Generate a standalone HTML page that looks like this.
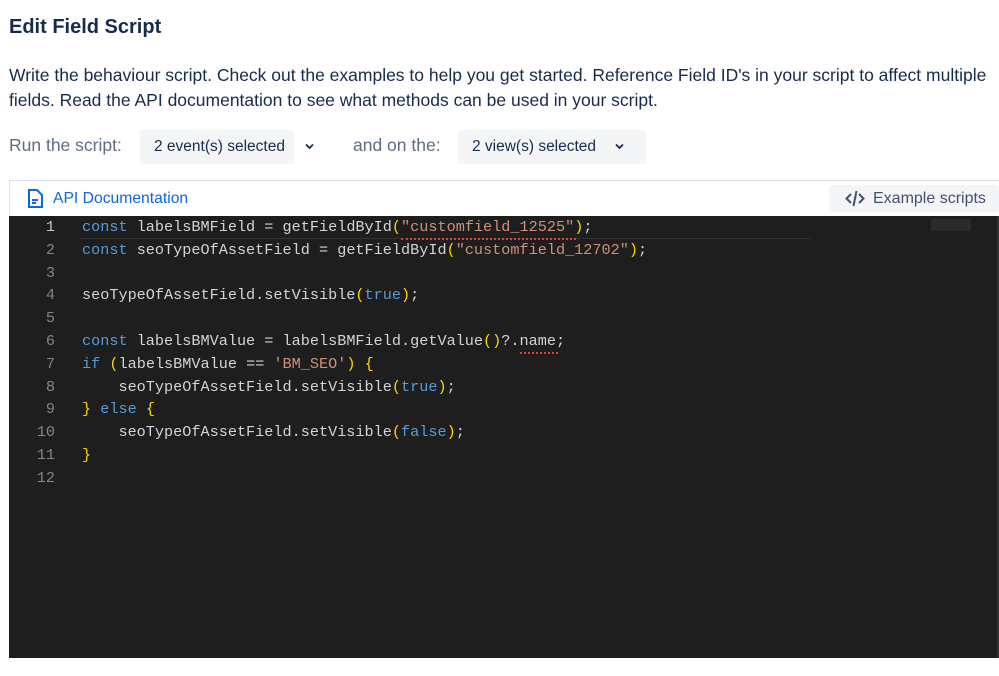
<!DOCTYPE html>
<html><head><style>
body{margin:0;width:999px;height:676px;background:#fff;font-family:"Liberation Sans",sans-serif;position:relative;overflow:hidden}
.a{position:absolute}
h1{position:absolute;left:9px;top:16px;margin:0;font-size:20px;font-weight:bold;color:#172b4d}
.p{left:9px;top:63px;font-size:17.5px;line-height:25px;color:#172b4d;white-space:nowrap}
.lbl{font-size:17.5px;color:#5e6c84}
.sel{background:#f4f5f7;border-radius:3px;height:34px;line-height:34px;font-size:15.5px;color:#172b4d;padding-left:14px;box-sizing:border-box;white-space:nowrap}
.sel svg{position:absolute;top:13px}
.ed{left:9px;top:216px;width:990px;height:442px;background:#1e1e1e;font-family:"Liberation Mono",monospace;font-size:15.2px}
.ln{position:absolute;left:0;width:46px;text-align:right;color:#858585}
.cd{position:absolute;left:73px;color:#d4d4d4;white-space:pre}
.k{color:#569cd6}.s{color:#ce9178}.y{color:#ffd700}
.sq{position:absolute;height:3px;border-bottom:2px dotted #e03c3c}
</style></head><body>
<h1>Edit Field Script</h1>
<div class="a p">Write the behaviour script. Check out the examples to help you get started. Reference Field ID's in your script to affect multiple<br>fields. Read the API documentation to see what methods can be used in your script.</div>
<div class="a lbl" style="left:9px;top:135px">Run the script:</div>
<div class="a sel" style="left:140px;top:130px;width:154px">2 event(s) selected<svg style="left:165px" width="9" height="7" viewBox="0 0 9 7"><path d="M1 1.5l3.5 3.5 3.5-3.5" fill="none" stroke="#172b4d" stroke-width="1.8"/></svg></div>
<div class="a lbl" style="left:353px;top:135px">and on the:</div>
<div class="a sel" style="left:458px;top:130px;width:188px">2 view(s) selected<svg style="left:157px" width="9" height="7" viewBox="0 0 9 7"><path d="M1 1.5l3.5 3.5 3.5-3.5" fill="none" stroke="#172b4d" stroke-width="1.8"/></svg></div>
<div class="a" style="left:9px;top:180px;width:990px;height:36px;border-top:1px solid #dfe1e6;border-left:1px solid #dfe1e6"></div>
<svg class="a" style="left:27px;top:189px" width="16" height="20" viewBox="0 0 16 20"><path d="M2 1h8l5 5v12H2z" fill="none" stroke="#0c66e4" stroke-width="2"/><path d="M5 11h6M5 14h4" stroke="#0c66e4" stroke-width="2"/></svg>
<div class="a" style="left:53px;top:190px;font-size:15.7px;color:#0c66e4">API Documentation</div>
<div class="a" style="left:829px;top:185px;width:170px;height:27px;background:#f4f5f7;border-radius:3px;font-size:16px;color:#42526e;line-height:27px;padding-left:44px;box-sizing:border-box">Example scripts</div>
<svg class="a" style="left:845px;top:190px" width="20" height="17" viewBox="0 0 20 17"><path d="M6 4L1.5 8.5 6 13M14 4l4.5 4.5L14 13M11.5 1L8.5 16" fill="none" stroke="#42526e" stroke-width="2"/></svg>
<div class="a ed">
<div class="a" style="left:72px;top:22px;width:730px;height:1px;background:#333"></div>
<div class="a" style="left:988px;top:0;width:2px;height:442px;background:#333"></div>
<div class="a" style="left:922px;top:3px;width:40px;height:12px;background:#2a2a2a"></div>
<div class="sq" style="left:392px;top:19px;width:175px"></div>
<div class="sq" style="left:511px;top:133px;width:38px"></div>
<div style="position:absolute;top:0;left:0;line-height:22.8px;padding-top:0">
<div class="ln" style="color:#c6c6c6">1<br><span style="color:#858585">2<br>3<br>4<br>5<br>6<br>7<br>8<br>9<br>10<br>11<br>12</span></div>
<div class="cd"><span class="k">const</span> labelsBMField = getFieldById<span class="y">(</span><span class="s">"customfield_12525"</span><span class="y">)</span>;
<span class="k">const</span> seoTypeOfAssetField = getFieldById<span class="y">(</span><span class="s">"customfield_12702"</span><span class="y">)</span>;

seoTypeOfAssetField.setVisible<span class="y">(</span><span class="k">true</span><span class="y">)</span>;

<span class="k">const</span> labelsBMValue = labelsBMField.getValue<span class="y">()</span>?.name;
<span class="k">if</span> <span class="y">(</span>labelsBMValue == <span class="s">'BM_SEO'</span><span class="y">)</span> <span class="y">{</span>
    seoTypeOfAssetField.setVisible<span class="y">(</span><span class="k">true</span><span class="y">)</span>;
<span class="y">}</span> <span class="k">else</span> <span class="y">{</span>
    seoTypeOfAssetField.setVisible<span class="y">(</span><span class="k">false</span><span class="y">)</span>;
<span class="y">}</span>
</div></div></div>
</body></html>
